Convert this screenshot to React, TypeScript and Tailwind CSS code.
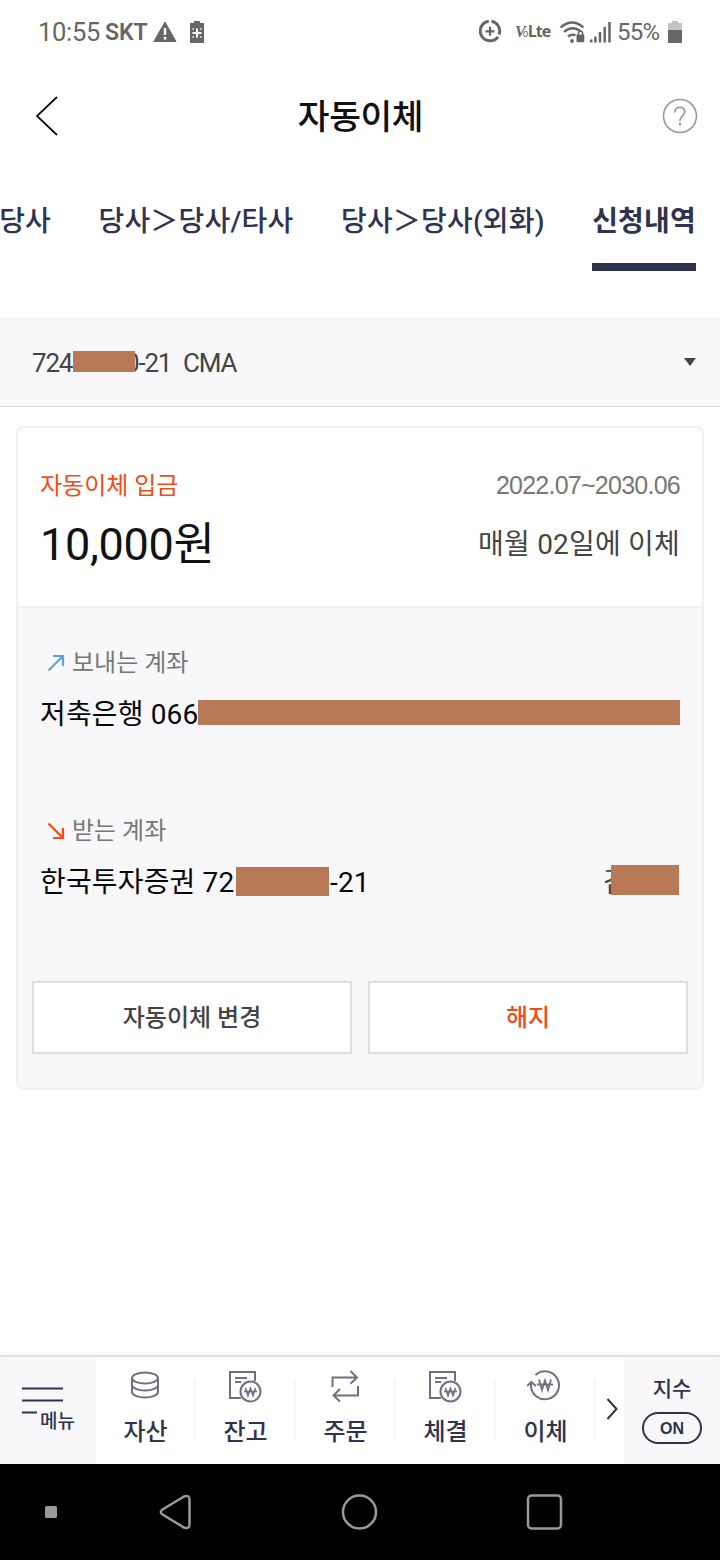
import { clsx } from "clsx";
import type { ReactNode } from "react";

const tabs = ["당사", "당사＞당사/타사", "당사＞당사(외화)", "신청내역"];

function StatusBar() {
  return (
    <div className="flex h-16 items-center justify-between pl-[38px] pr-[36px] text-[#666]">
      <div className="flex items-center">
        <span className="w-[67px] text-[25.5px] leading-8 tracking-[-0.3px]">10:55</span>
        <span className="w-[48px] pt-px text-[23px] font-semibold leading-8">SKT</span>
        <svg className="h-6 w-6" viewBox="153 19 24 24">
          <path d="M165 21 176 40.500H153.800Z" fill="#666" stroke="#666" strokeLinejoin="round" />
          <path d="M165 27v7" stroke="#fff" strokeWidth="2.400" />
          <path d="M165 36v2.600" stroke="#fff" strokeWidth="2.400" />
        </svg>
        <svg className="ml-3 h-6 w-4" viewBox="189 19 16 24">
          <path d="M190 22h4v-2h6v2h4v20h-14z" fill="#666" />
          <path d="M197 27.500v9M192.500 32h9" stroke="#fff" strokeWidth="2" />
          <path d="M192.500 28h1.500M200 28h1.500M192.500 36h1.500M200 36h1.500" stroke="#fff" strokeWidth="1.300" />
        </svg>
      </div>
      <div className="flex items-center">
        <svg className="h-6 w-6" viewBox="479 19.500 24 24" fill="none" stroke="#666">
          <path d="M488.800 20.800A9.800 9.800 0 1 0 498 36.300" strokeWidth="3" />
          <path d="M491.500 20.800A9.800 9.800 0 0 1 499 34" strokeWidth="3" />
          <path d="M490 26.300v9M485.500 30.800h9" strokeWidth="2.200" />
        </svg>
        <span className="ml-[12px] flex w-[36px] items-baseline leading-6">
          <span className="font-['Liberation_Serif'] text-[16px] font-bold italic tracking-[-3px]">V</span>
          <span className="text-[10px] italic tracking-[-0.5px]">o</span>
          <span className="font-['Open_Sans'] text-[16px] font-bold tracking-[-1px]">Lte</span>
        </span>
        <svg className="ml-[9px] h-6 w-[53px]" viewBox="560 19 53 24">
          <g fill="none" stroke="#666" strokeWidth="2.300">
            <path d="M560.500 26.500Q572 16.500 583.500 26.500" />
            <path d="M564 31Q572 24 580.500 30" />
            <path d="M568 35.500Q572 32.500 575.500 34.500" />
          </g>
          <circle cx="572" cy="40" r="1.900" fill="#666" />
          <rect x="576.500" y="33.500" width="7.800" height="7.800" rx="1" fill="#666" />
          <path d="M578.300 34v-1.500a2.200 2.200 0 0 1 4.400 0v1.500" fill="none" stroke="#666" strokeWidth="1.400" />
          <path d="M591.200 38.500V41.500M595.400 35.500V41.500M600 31V41.500M604.700 26V41.500M609.500 21V41.500" stroke="#666" strokeWidth="2.500" />
        </svg>
        <span className="ml-[4px] w-[51px] text-[24px] leading-8 tracking-[-0.7px]">55%</span>
        <svg className="h-6 w-4" viewBox="668.500 19 16 24">
          <path d="M668.500 22h4v-2h6v2h4v8h-14z" fill="#c4c4c4" />
          <path d="M668.500 29h14v12q0 1-1 1h-12q-1 0-1-1z" fill="#666" />
        </svg>
      </div>
    </div>
  );
}

function Header() {
  return (
    <header className="flex h-[104px] items-center justify-between pl-[34px] pr-[22px]">
      <svg className="h-[42px] w-7" viewBox="34 95 28 42" fill="none" stroke="#111" strokeWidth="1.800">
        <path d="M57 97 37 116l20 19" />
      </svg>
      <h1 className="mr-[3px] pt-[2px] text-[34.5px] font-medium leading-[48px] tracking-[-0.4px] text-[#111]">자동이체</h1>
      <svg className="h-9 w-9" viewBox="662 98 36 36" fill="none" stroke="#999">
        <circle cx="680" cy="116" r="16.500" strokeWidth="1.600" />
        <path d="M674.800 112.500q0-5.200 5-5.200t5 4.700c0 4-4.900 3.800-4.900 9" strokeWidth="1.700" />
        <path d="M680 122.800v2.400" strokeWidth="2" />
      </svg>
    </header>
  );
}

function Redaction({ className }: { className: string }) {
  return <span className={clsx("absolute bg-[#b87a56]", className)} />;
}

function AccountBlock({ icon, label, children }: { icon: ReactNode; label: string; children: ReactNode }) {
  return (
    <div className="h-[168px]">
      <div className="flex h-9 items-center text-[24px] text-[#777]">
        <svg className="mx-[6px] h-5 w-5" viewBox="0 0 20 20" fill="none" strokeWidth="2.200">{icon}</svg>
        <span className="pt-[2px]">{label}</span>
      </div>
      <div className="relative mt-3 flex h-[42px] items-center justify-between whitespace-pre pt-[3px] text-[28px] tracking-[0.15px] text-[#080808]">
        {children}
      </div>
    </div>
  );
}

function WonDocIcon() {
  return (
    <svg className="h-9 w-9" viewBox="0 0 36 36" fill="none" stroke="#717083" strokeWidth="2">
      <path d="M14 30H3V4h25v9" />
      <path d="M8 10h12M8 14h6" />
      <circle cx="23.500" cy="23.500" r="10" />
      <path d="m18.500 20 2.500 7.500 2.500-7 2.500 7 2.500-7.500M17 23.500h13" strokeWidth="1.700" />
    </svg>
  );
}

const navItems = [
  {
    label: "자산",
    icon: (
      <svg className="h-9 w-9" viewBox="0 0 36 36" fill="none" stroke="#717083" strokeWidth="2">
        <ellipse cx="18" cy="10" rx="13" ry="5.500" />
        <path d="M5 10v14c0 3 6 5.500 13 5.500s13-2.500 13-5.500V10" />
        <path d="M5 17c0 3 6 5.500 13 5.500s13-2.500 13-5.500" />
      </svg>
    ),
  },
  { label: "잔고", icon: <WonDocIcon /> },
  {
    label: "주문",
    icon: (
      <svg className="h-9 w-9" viewBox="0 0 36 36" fill="none" stroke="#717083" strokeWidth="2">
        <path d="M5.500 19V9.500H30M23.500 3l6.500 6.500-6.500 6.300" />
        <path d="M31 18v9.500H6.500M13 21l-6.500 6.500 6.500 6" />
      </svg>
    ),
  },
  { label: "체결", icon: <WonDocIcon /> },
  {
    label: "이체",
    icon: (
      <svg className="h-9 w-9" viewBox="0 0 36 36" fill="none" stroke="#717083" strokeWidth="2">
        <path d="M8.500 7A14 14 0 1 1 4 17V14" />
        <path d="m0 18 4.300-4 4.700 4" />
        <path d="m12 11.500 3 10.500 3-9.500 3 9.500 3-10.500M10 16.500H26" strokeWidth="1.800" />
      </svg>
    ),
  },
];

export default function App() {
  return (
    <div className="flex h-[1560px] w-[720px] flex-col overflow-hidden bg-white font-['Roboto','Noto_Sans_CJK_KR',sans-serif]">
      <StatusBar />
      <Header />

      <nav className="flex h-[149px] justify-end gap-[47.4px] pr-6 text-[28px] tracking-[0.2px] text-[#30334f]">
        {tabs.map((tab, i) => (
          <div
            key={tab}
            className={clsx(
              "h-[103px] shrink-0 whitespace-nowrap pt-[34px] leading-10",
              i === tabs.length - 1 ? "border-b-8 border-[#30334f] font-bold" : "font-medium"
            )}
          >
            {tab}
          </div>
        ))}
      </nav>

      <div className="relative flex h-[90px] items-center justify-between border-b border-[#dfe0e4] bg-[#f8f8fb] pl-8 pr-6 text-[26px] tracking-[-1.2px] text-[#444]">
        <span className="flex whitespace-pre pt-[4px]">
          <span className="w-[93px]">724</span>
          <span className="w-[58px]">0-21</span>
          <span>CMA</span>
        </span>
        <Redaction className="left-[73px] top-[34px] h-[21px] w-[62px]" />
        <svg className="mt-px h-2 w-3" viewBox="0 0 12 8">
          <path d="M0 0h12L6 8z" fill="#444" />
        </svg>
      </div>

      <main className="mx-4 mt-[19px] h-[664px] shrink-0 overflow-hidden rounded-lg border-2 border-[#f0f0f1] bg-[#f8f8fb]">
        <div className="flex h-[180px] justify-between border-b-2 border-[#f0f0f1] bg-white px-[22px] pt-10">
          <div>
            <p className="text-[24px] leading-9 text-[#f34b16]">자동이체 입금</p>
            <p className="mt-[11px] text-[45px] leading-[60px] tracking-[-0.3px] text-[#111]">10,000원</p>
          </div>
          <div className="text-right">
            <p className="-mt-px font-['Liberation_Sans'] text-[25px] leading-9 tracking-[-0.75px] text-[#777]">2022.07~2030.06</p>
            <p className="mt-[21px] text-[28px] leading-[42px] tracking-[0.2px] text-[#444]">매월 02일에 이체</p>
          </div>
        </div>

        <div className="px-[22px] pt-9">
          <AccountBlock
            label="보내는 계좌"
            icon={<path d="M2.500 18.500 17 4M7 4h10v10" stroke="#62a0e5" />}
          >
            <span>저축은행 066</span>
            <Redaction className="left-[158px] top-[8px] h-[25px] w-[482px]" />
          </AccountBlock>
          <AccountBlock
            label="받는 계좌"
            icon={<path d="M2.500 3.500 17 18M7 18h10V8" stroke="#f34b16" />}
          >
            <span className="flex">
              <span className="w-[290px]">한국투자증권 72</span>
              <span>-21</span>
            </span>
            <span className="mr-[51px] text-[#444]">김</span>
            <Redaction className="left-[196px] top-[7px] h-[29px] w-[93px]" />
            <Redaction className="right-[1px] top-[5px] h-[30px] w-[68px]" />
          </AccountBlock>
        </div>

        <div className="flex gap-4 px-[14px] pt-[1px] text-[24px] font-medium">
          <button className="h-[73px] flex-1 border-2 border-[#dfdfe0] bg-white pt-px text-[#444]">자동이체 변경</button>
          <button className="h-[73px] flex-1 border-2 border-[#dfdfe0] bg-white pt-px text-[#f34b16]">해지</button>
        </div>
      </main>

      <footer className="mt-auto flex h-[109px] shrink-0 border-t-2 border-[#e0e0e1] text-[#30334f] shadow-[0_-2px_5px_rgba(0,0,0,0.04)]">
        <div className="flex w-24 bg-[#f8f8fb] pl-[22px] pt-[29px]">
          <svg className="h-[30px] w-[42px] shrink-0" viewBox="0 0 42 30" stroke="#30334f" strokeWidth="2">
            <path d="M0 2.500h41M0 14.500h41M0 26.500h15" />
          </svg>
          <span className="-ml-6 mt-[22px] shrink-0 text-[19px] font-medium leading-7">메뉴</span>
        </div>
        {navItems.map((item) => (
          <div key={item.label} className="flex w-[100px] shrink-0 items-start">
            <div className="flex flex-1 flex-col items-center pt-[11px] text-[24px] font-medium">
              {item.icon}
              <span className="mt-[10px] pl-[1px] leading-9">{item.label}</span>
            </div>
            <div className="mt-[22px] h-[61px] w-[2px] bg-[#f6f6f7]" />
          </div>
        ))}
        <div className="flex w-7 items-center justify-end pr-[6px] pb-[3px]">
          <svg className="h-6 w-3" viewBox="0 0 12 24" fill="none" stroke="#30334f" strokeWidth="2">
            <path d="m1.500 2 9 10-9 10" />
          </svg>
        </div>
        <div className="flex flex-1 flex-col items-center bg-[#f8f8fb] pt-4">
          <span className="text-[21px] font-medium leading-8">지수</span>
          <span className="mt-[7px] flex h-8 w-[60px] items-center justify-center rounded-full border-2 border-[#30334f] pt-px font-['Liberation_Sans'] text-[16px] font-bold">
            ON
          </span>
        </div>
      </footer>

      <div className="h-24 shrink-0 bg-black">
        <svg className="h-24 w-[720px]" viewBox="0 0 720 96" fill="none" stroke="#999" strokeWidth="2.500">
          <rect x="45" y="42" width="12" height="12" rx="1.500" fill="#999" stroke="none" />
          <path d="M184 32.500 162.500 45.500q-3.500 2.500 0 5L184 63.500q5.500 2 5.500-3v-25q0-5-5.500-3z" />
          <circle cx="359.500" cy="48" r="16.500" />
          <rect x="528" y="31.500" width="33" height="33" rx="3.500" />
        </svg>
      </div>
    </div>
  );
}
